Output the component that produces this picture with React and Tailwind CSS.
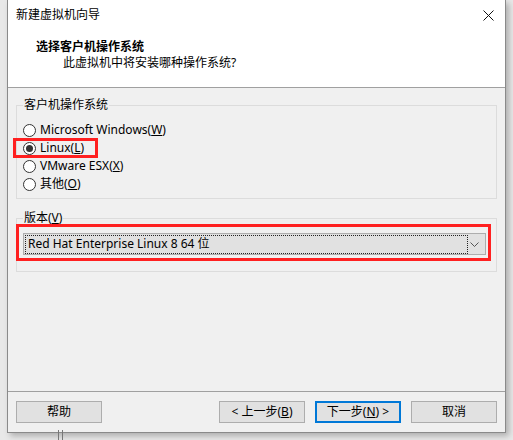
import React from "react";

const font = {
  fontFamily: '"Noto Sans", "Noto Sans CJK SC", sans-serif',
};

const Radio = ({ checked }) => (
  <span className="flex h-[13px] w-[13px] items-center justify-center rounded-full border border-[#333333] bg-white">
    {checked && <span className="h-[7px] w-[7px] rounded-full bg-[#333333]" />}
  </span>
);

const Btn = ({ children, primary }) => (
  <button
    className={
      primary
        ? "flex h-[22px] w-[86px] items-center justify-center border-2 border-[#0078d7] bg-[#e1e1e1] text-[12px] text-black"
        : "flex h-[22px] w-[86px] items-center justify-center border border-[#adadad] bg-[#e1e1e1] text-[12px] text-black"
    }
  >
    {children}
  </button>
);

export default function App() {
  const options = [
    { label: "Microsoft Windows(", key: "W", checked: false },
    { label: "Linux(", key: "L", checked: true },
    { label: "VMware ESX(", key: "X", checked: false },
    { label: "其他(", key: "O", checked: false },
  ];

  return (
    <div
      className="relative h-[440px] w-[513px] overflow-hidden bg-[#e8e8e8] text-[12px] text-black"
      style={font}
    >
      {/* background app lines under the dialog */}
      <div className="absolute left-[58px] top-[430px] h-[10px] w-[5px] border-x border-[#777777]" />

      <div className="ml-[7px] flex h-[433px] w-[499px] flex-col border border-t-0 border-[#8a8a8a] bg-[#f0f0f0] shadow-[3px_3px_6px_rgba(0,0,0,0.25)]">
        {/* TITLE BAR */}
        <div className="flex h-[30px] items-center justify-between bg-white pl-[8px] pr-[10px]">
          <span className="leading-none">新建虚拟机向导</span>
          <svg width="11" height="11" viewBox="0 0 11 11" className="mr-[1px]">
            <path d="M0.5 0.5L10.5 10.5M10.5 0.5L0.5 10.5" stroke="#111" strokeWidth="1" />
          </svg>
        </div>

        {/* HEADER */}
        <div className="h-[58px] border-b border-[#a0a0a0] bg-white pt-[9px]">
          <div className="pl-[28px] font-bold leading-[16px]">选择客户机操作系统</div>
          <div className="pl-[55px] leading-[16px]">此虚拟机中将安装哪种操作系统?</div>
        </div>

        {/* BODY */}
        <div className="flex-1 px-[8px]">
          <fieldset className="mt-[9px] h-[102px] w-[481px] border border-[#dcdcdc] px-[6px]">
            <legend className="px-[1px] leading-[16px]">客户机操作系统</legend>
            <div className="pt-[8px]">
              {options.map((o) => (
                <div key={o.key} className="relative flex h-[18px] items-center gap-[4px]">
                  <Radio checked={o.checked} />
                  <span className="leading-none">
                    {o.label}
                    <u>{o.key}</u>)
                  </span>
                  {o.checked && (
                    <span className="absolute -left-[10px] -top-[1px] h-[20px] w-[85px] border-[3px] border-[#ff2020]" />
                  )}
                </div>
              ))}
            </div>
          </fieldset>

          <fieldset className="mt-[11px] h-[62px] w-[481px] border border-[#dcdcdc] px-[6px]">
            <legend className="px-[1px] leading-[16px]">
              版本(<u>V</u>)
            </legend>
            <div className="relative mt-[7px] flex h-[22px] w-[463px] items-center border border-[#adadad] bg-[#e1e1e1] pl-[1px] pr-[6px]">
              <div className="flex h-[19px] w-[443px] items-center border border-dotted border-[#222222] pl-[2px]">
                Red Hat Enterprise Linux 8 64 位
              </div>
              <svg width="9" height="5" viewBox="0 0 9 5" className="ml-auto">
                <path d="M0.5 0.5L4.5 4.5L8.5 0.5" stroke="#555" fill="none" strokeWidth="1" />
              </svg>
              <span className="absolute -left-[8px] -top-[10px] h-[37px] w-[475px] border-[3px] border-[#ff2020]" />
            </div>
          </fieldset>
        </div>

        {/* FOOTER */}
        <div className="h-[41px] border-t border-[#a0a0a0] px-[8px] pt-[9px]">
          <div className="flex items-center">
            <Btn>帮助</Btn>
            <div className="ml-auto flex gap-[10px]">
              <Btn>
                &lt; 上一步(<u>B</u>)
              </Btn>
              <Btn primary>
                下一步(<u>N</u>) &gt;
              </Btn>
              <Btn>取消</Btn>
            </div>
          </div>
        </div>
      </div>
    </div>
  );
}
